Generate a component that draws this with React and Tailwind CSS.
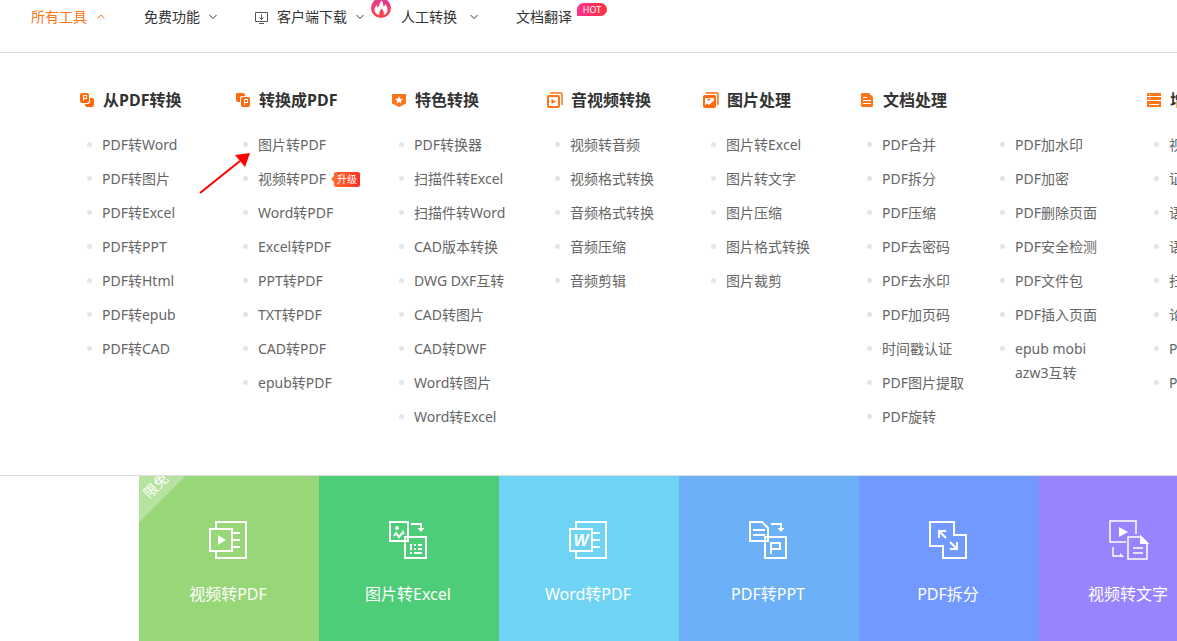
const menus = [
  {
    title: "从PDF转换",
    icon: "from",
    lists: [["PDF转Word", "PDF转图片", "PDF转Excel", "PDF转PPT", "PDF转Html", "PDF转epub", "PDF转CAD"]],
  },
  {
    title: "转换成PDF",
    icon: "to",
    lists: [["图片转PDF", "视频转PDF", "Word转PDF", "Excel转PDF", "PPT转PDF", "TXT转PDF", "CAD转PDF", "epub转PDF"]],
  },
  {
    title: "特色转换",
    icon: "star",
    lists: [["PDF转换器", "扫描件转Excel", "扫描件转Word", "CAD版本转换", "DWG DXF互转", "CAD转图片", "CAD转DWF", "Word转图片", "Word转Excel"]],
  },
  {
    title: "音视频转换",
    icon: "video",
    lists: [["视频转音频", "视频格式转换", "音频格式转换", "音频压缩", "音频剪辑"]],
  },
  {
    title: "图片处理",
    icon: "image",
    lists: [["图片转Excel", "图片转文字", "图片压缩", "图片格式转换", "图片裁剪"]],
  },
  {
    title: "文档处理",
    icon: "doc",
    lists: [
      ["PDF合并", "PDF拆分", "PDF压缩", "PDF去密码", "PDF去水印", "PDF加页码", "时间戳认证", "PDF图片提取", "PDF旋转"],
      ["PDF加水印", "PDF加密", "PDF删除页面", "PDF安全检测", "PDF文件包", "PDF插入页面", "epub mobi azw3互转"],
    ],
  },
  {
    title: "增值服务",
    icon: "server",
    lists: [["视频压缩", "证件照", "语音转文字", "语音合成", "扫描识别", "论文查重", "PPT模板", "PDF阅读器"]],
  },
];

const tiles = [
  { label: "视频转PDF", icon: "videoPdf", color: "bg-[#97d778]", free: true },
  { label: "图片转Excel", icon: "imageExcel", color: "bg-[#4ecd78]" },
  { label: "Word转PDF", icon: "wordPdf", color: "bg-[#6fd4f4]" },
  { label: "PDF转PPT", icon: "pdfPpt", color: "bg-[#6cb0f7]" },
  { label: "PDF拆分", icon: "split", color: "bg-[#7299ff]" },
  { label: "视频转文字", icon: "videoText", color: "bg-[#9784ff]" },
];

const menuIcons = {
  from: (
    <>
      <path d="M11 6h2a2 2 0 0 1 2 2v5a2 2 0 0 1-2 2H8a2 2 0 0 1-2-2v-1h3a2 2 0 0 0 2-2z" fill="#ff6a0c" />
      <rect x="1" y="1" width="9" height="10" rx="2" fill="#ff6a0c" />
      <rect x="4.500" y="3.500" width="3" height="3" fill="none" stroke="#fff" />
      <line x1="4.500" y1="3" x2="4.500" y2="9" stroke="#fff" />
    </>
  ),
  to: (
    <>
      <path d="M2 1h6a2 2 0 0 1 2 2v1H7a2 2 0 0 0-2 2v4H3a2 2 0 0 1-2-2V2a1 1 0 0 1 1-1z" fill="#ff6a0c" />
      <rect x="6" y="5" width="9" height="10" rx="2" fill="#ff6a0c" />
      <rect x="9.500" y="7.500" width="3" height="3" fill="none" stroke="#fff" />
      <line x1="9.500" y1="7" x2="9.500" y2="13" stroke="#fff" />
    </>
  ),
  star: (
    <>
      <path d="M1 2h14v9.500L8 15 1 11.500z" fill="#ff7519" />
      <path d="M8 4l1.100 2.700 2.900.2-2.200 1.900.7 2.800L8 10.100l-2.500 1.500.7-2.800L4 6.900l2.900-.2z" fill="#fff" />
    </>
  ),
  video: (
    <>
      <path d="M3 1h11a1 1 0 0 1 1 1v11" fill="none" stroke="#ff7519" strokeWidth="1.500" />
      <rect x="1" y="4" width="11" height="11" rx="1" fill="none" stroke="#ff7519" strokeWidth="2" />
      <path d="M4.500 7v5l4.500-2.500z" fill="#ff7519" />
    </>
  ),
  image: (
    <>
      <path d="M3 1h10.500A1.500 1.500 0 0 1 15 2.500V13" fill="none" stroke="#ff6a0c" strokeWidth="1.500" />
      <rect x="0" y="3" width="13" height="13" rx="2" fill="#ff6a0c" />
      <path d="M2 6h9v2.500L6 13 4.500 11.500 2 13z" fill="#fff" />
      <path d="M4 7l1.500 2L8 7z" fill="#ff6a0c" />
    </>
  ),
  doc: (
    <>
      <path d="M3 1h7l4 4v8.500a1.500 1.500 0 0 1-1.500 1.500h-9A1.500 1.500 0 0 1 2 13.500V2a1 1 0 0 1 1-1z" fill="#ff7519" />
      <path d="M4 5.500h4M4 8.500h8M4 11.500h8" stroke="#fff" />
    </>
  ),
  server: (
    <>
      <path d="M1 1h14v3H1zM1 5h14v3H1zM1 9h14v6H1z" fill="#ff7519" />
      <path d="M3 2.500h1M3 6.500h1M3 12.500h10" stroke="#fff" />
    </>
  ),
};

const tileIcons = {
  videoPdf: (
    <>
      <path d="M7 7V1h30v36H7v-6" />
      <rect x="1" y="8" width="22" height="22" />
      <path d="M24 12h7M24 19h7M24 26h7" />
      <path d="M9 14v10l8-5z" fill="#fff" stroke="none" />
    </>
  ),
  imageExcel: (
    <>
      <rect x="1" y="1" width="18" height="19" />
      <rect x="16" y="16" width="21" height="21" />
      <path d="M22 3h10v5" />
      <path d="M28.500 7h7L32 11z" fill="#fff" stroke="none" />
      <circle cx="8" cy="7" r="2" fill="#fff" stroke="none" />
      <path d="M5 15l2-3 3 4 4-5 1 2" />
      <path d="M21 24h2M25 24h2M29 24h4M21 28h2M25 28h2M29 28h4M21 32h2M25 32h8M22 24v5" />
    </>
  ),
  wordPdf: (
    <>
      <path d="M7 7V1h30v36H7v-6" />
      <rect x="1" y="8" width="22" height="22" />
      <path d="M24 12h7M24 19h7M24 26h7" />
      <text
        x="12"
        y="25"
        textAnchor="middle"
        className="font-['Liberation_Sans',sans-serif] text-[16px] font-bold italic"
        fill="#fff"
        stroke="none"
      >
        W
      </text>
    </>
  ),
  pdfPpt: (
    <>
      <path d="M1 1h12l6 6v13H1z" />
      <path d="M4 9h12M4 14h12" />
      <rect x="16" y="16" width="21" height="21" />
      <path d="M22 3h10v5" />
      <path d="M28.500 7h7L32 11z" fill="#fff" stroke="none" />
      <rect x="22" y="22" width="9" height="6" />
      <line x1="22" y1="21" x2="22" y2="33" />
    </>
  ),
  split: (
    <>
      <path d="M1 1h24v13h12v23H14V25H1z" />
      <path d="M10 17v-7h7M10 10l7 7M28 21v7h-7M28 28l-7-7" />
    </>
  ),
  videoText: (
    <>
      <path d="M27 13V0H1v21h16" strokeWidth="1.500" />
      <path d="M10 6v10l9-5z" fill="#fff" stroke="none" />
      <path d="M19 16h13l6 6v16H19z" strokeWidth="1.500" />
      <path d="M32 16v6h6z" fill="#fff" />
      <path d="M24 27h10M24 32h10M4 26v9h9" strokeWidth="1.500" />
      <path d="M11 32l4 4h-4z" fill="#fff" stroke="none" />
    </>
  ),
};

function Chevron({ up }) {
  return (
    <svg className="h-2 w-2" viewBox="0 0 8 8" fill="none" stroke="currentColor">
      <path d={up ? "M.5 5.500L4 2l3.500 3.500" : "M.5 2L4 5.500 7.500 2"} />
    </svg>
  );
}

function Nav() {
  return (
    <nav className="flex h-[53px] items-start border-b border-[#ddd] pt-[5px] pl-[31px] text-sm leading-6 whitespace-nowrap text-[#333]">
      <a href="#" className="mr-[39px] flex items-center gap-[10px] text-[#ff7519]">
        所有工具
        <Chevron up />
      </a>
      <a href="#" className="mr-[38px] flex items-center gap-[9px]">
        免费功能
        <Chevron />
      </a>
      <a href="#" className="relative mr-[37px] flex items-center gap-[9px]">
        <svg className="h-[13px] w-[13px]" viewBox="0 0 13 13" fill="none" stroke="#555">
          <path d="M.5 1.500h12v9H.5zM4 12.500h5M6.500 3.500v5M4.500 6.500l2 2 2-2" />
        </svg>
        客户端下载
        <Chevron />
        <svg className="absolute -top-[7px] -right-[27px] h-5 w-5" viewBox="0 0 20 20">
          <defs>
            <linearGradient id="flame" x1="0" y1="0" x2="0" y2="1">
              <stop offset="0" stopColor="#e0389a" />
              <stop offset="1" stopColor="#ff4242" />
            </linearGradient>
          </defs>
          <circle cx="10" cy="10" r="10" fill="url(#flame)" />
          <path
            d="M10.500 2.500c2 2 1.500 4.500 2 6 1 0 1.500-1 1.500-2.500 2 2 2.500 4 2.500 6 0 3-2 4.500-4 5 1-2 0-4.500-2-6.500-1 2-3 3.500-2 6.500-2.500-.5-5-2-5-5 0-2 1-4 2.500-5 0 1.500 0 2.500 1 2.500C8.500 8 8.500 4.500 10.500 2.500z"
            fill="#fff"
          />
        </svg>
      </a>
      <a href="#" className="mr-[38px] flex items-center gap-[13px]">
        人工转换
        <Chevron />
      </a>
      <a href="#" className="relative">
        文档翻译
        <span className="absolute -top-[2px] -right-[35px] flex h-[13px] w-[30px] items-center justify-center rounded-[7px] rounded-bl-none bg-linear-to-r from-[#ff2d8e] to-[#ff3030] text-[9px] text-white">
          HOT
        </span>
      </a>
    </nav>
  );
}

function MenuItem({ label }) {
  return (
    <li className="flex gap-[10px] pl-[8px]">
      <span className="mt-[9px] h-[5px] w-[5px] shrink-0 rounded-full bg-[#e5e5e5]" />
      <a href="#" className="flex max-w-[106px] items-center text-[#666]">
        {label}
        {label === "视频转PDF" && (
          <>
            <svg className="ml-[5px] h-[6px] w-[3px] shrink-0" viewBox="0 0 3 6">
              <path d="M3 0v6L0 3z" fill="#ff6a2b" />
            </svg>
            <span className="shrink-0 rounded-xs bg-linear-to-r from-[#ff6a2b] to-[#ff2a2a] px-[3px] text-[10px] leading-[15px] whitespace-nowrap text-white">
              升级
            </span>
          </>
        )}
      </a>
    </li>
  );
}

function Menu() {
  return (
    <div className="flex overflow-hidden border-b border-[#ddd] pt-[35px] pb-[46px] pl-[79px]">
      {menus.map((menu) => (
        <section key={menu.title} className={menu.lists.length > 1 ? "w-[287px] shrink-0" : "w-[156px] shrink-0"}>
          <h3 className="flex items-center gap-2 text-base leading-6 font-bold text-[#333]">
            <svg className="h-4 w-4" viewBox="0 0 16 16">
              {menuIcons[menu.icon]}
            </svg>
            {menu.title}
          </h3>
          <div className="mt-[21px] flex">
            {menu.lists.map((list) => (
              <ul key={list[0]} className="flex w-[133px] shrink-0 flex-col gap-[10px] text-sm leading-6">
                {list.map((label) => (
                  <MenuItem key={label} label={label} />
                ))}
              </ul>
            ))}
          </div>
        </section>
      ))}
    </div>
  );
}

export default function App() {
  return (
    <div className="relative overflow-hidden bg-white font-['Noto_Sans','Noto_Sans_CJK_SC',sans-serif]">
      <Nav />
      <Menu />

      {/* 快捷入口 */}
      <div className="flex pl-[139px]">
        {tiles.map((tile) => (
          <a
            key={tile.label}
            href="#"
            className={`relative flex h-[165px] w-[180px] shrink-0 flex-col items-center gap-[23px] overflow-hidden pt-[45px] pr-[2px] text-base leading-6 text-white ${tile.color}`}
          >
            {tile.free && (
              <span className="absolute -top-[33px] -left-[50px] h-[66px] w-[100px] -rotate-45 bg-white/30 pt-[40px] pl-[10px] text-center text-sm leading-6">
                限免
              </span>
            )}
            <svg className="h-[38px] w-[38px] overflow-visible" viewBox="0 0 38 38" fill="none" stroke="#fff" strokeWidth="2">
              {tileIcons[tile.icon]}
            </svg>
            {tile.label}
          </a>
        ))}
      </div>

      {/* 指向“图片转PDF”的箭头 */}
      <svg className="absolute top-[150px] left-[198px] h-[46px] w-[54px]" viewBox="0 0 54 46">
        <path d="M2 43L42 11" stroke="#f00" strokeWidth="2" />
        <path d="M52 3L37 5l10 12z" fill="#f00" />
      </svg>
    </div>
  );
}
